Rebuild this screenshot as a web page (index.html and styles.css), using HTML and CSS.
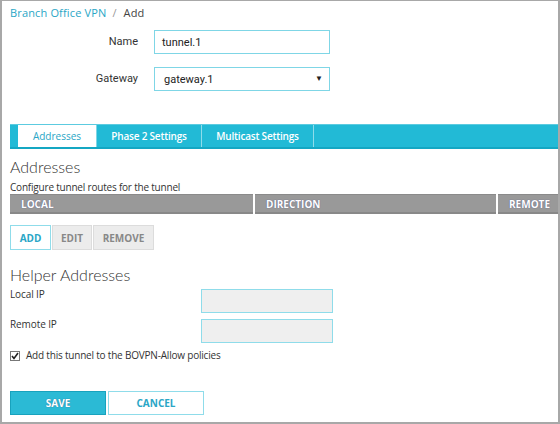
FILE: index.html
```html
<!DOCTYPE html>
<html>
<head>
<meta charset="utf-8">
<link rel="stylesheet" href="styles.css">
</head>
<body>
<div class="frame">
  <div class="crumbs"><a class="crumb-link">Branch Office VPN</a><span class="crumb-sep">/</span><span class="crumb-cur">Add</span></div>

  <div class="form-top">
    <div class="row">
      <label class="lbl">Name</label>
      <div class="field">tunnel.1</div>
    </div>
    <div class="row">
      <label class="lbl">Gateway</label>
      <div class="field select">gateway.1<span class="caret">▼</span></div>
    </div>
  </div>

  <div class="tabs">
    <div class="tab-lead"></div>
    <div class="tab active">Addresses</div>
    <div class="tab">Phase 2 Settings</div>
    <div class="tab">Multicast Settings</div>
    <div class="tab-fill"></div>
  </div>

  <h2 class="heading">Addresses</h2>
  <div class="desc">Configure tunnel routes for the tunnel</div>
  <div class="thead">
    <div class="th c1">LOCAL</div>
    <div class="th c2">DIRECTION</div>
    <div class="th c3">REMOTE</div>
  </div>

  <div class="btn-group">
    <div class="gbtn on">ADD</div>
    <div class="gbtn">EDIT</div>
    <div class="gbtn">REMOVE</div>
  </div>

  <h2 class="heading h2b">Helper Addresses</h2>
  <div class="hrow">
    <div class="hlbl">Local IP</div>
    <div class="hfield"></div>
  </div>
  <div class="hrow">
    <div class="hlbl">Remote IP</div>
    <div class="hfield"></div>
  </div>
  <div class="check-row">
    <span class="cbox"><svg width="8" height="8" viewBox="0 0 8 8"><path d="M1 4 L3 6.5 L7 1" fill="none" stroke="#222" stroke-width="1.6"/></svg></span>
    <span>Add this tunnel to the BOVPN-Allow policies</span>
  </div>

  <div class="actions">
    <div class="btn save">SAVE</div>
    <div class="btn cancel">CANCEL</div>
  </div>
</div>
</body>
</html>
```
FILE: styles.css
```css
html, body { margin: 0; padding: 0; background: #fff; }
body { font-family: "Open Sans", "DejaVu Sans", sans-serif; color: #333; }
.frame {
  width: 560px; height: 424px; box-sizing: border-box;
  border-top: 1px solid #a8a8a8; border-left: 2px solid #a8a8a8;
  border-right: 2px solid #a8a8a8; border-bottom: 2px solid #a8a8a8;
  padding: 0 0 0 8px;
  display: flex; flex-direction: column;
}
.crumbs { font-size: 11px; line-height: 16px; margin-top: 4px; font-family: "Open Sans", sans-serif; letter-spacing: 0.15px; }
.crumb-link { color: #2aa6c6; }
.crumb-sep { color: #999; margin: 0 7px 0 6px; }
.crumb-cur { color: #444; }

.form-top { display: flex; flex-direction: column; gap: 13px; margin-top: 9px; }
.row { display: flex; align-items: center; }
.lbl { width: 144px; box-sizing: border-box; text-align: right; padding-right: 16px; font-family: Roboto, "Liberation Sans", Arial, sans-serif; font-size: 11px; color: #333; margin-top: -1px; }
.field {
  width: 176px; height: 24px; box-sizing: border-box;
  border: 1px solid #7fd6e6; padding: 0 7px;
  font-family: Roboto, "Liberation Sans", Arial, sans-serif; font-size: 11px; color: #222;
  display: flex; align-items: center;
}
.select { position: relative; padding-left: 9px; }
.caret { position: absolute; right: 6px; top: 6px; font-size: 8px; color: #222; }

.tabs {
  margin-top: 33px; height: 25px; box-sizing: border-box;
  display: flex; background: #22bad6;
  border-top: 1px solid #5ccbe0; border-bottom: 2px solid #14a7c3;
}
.tab-lead { width: 8px; }
.tab {
  font-size: 10px; font-weight: 600; color: #fff; letter-spacing: -0.2px;
  display: flex; align-items: center; justify-content: center;
  border-right: 1px solid #8fdcea; box-sizing: border-box;
}
.tab:nth-child(2) { width: 79px; }
.tab:nth-child(3) { width: 105px; }
.tab:nth-child(4) { width: 112px; }
.tab.active { background: #fff; color: #2aa6c6; font-weight: 400; border-right: 1px solid #7fd6e6; letter-spacing: 0; }
.tab-fill { flex: 1; }

.heading {
  margin: 8px 0 0 0; font-family: Lato, "Open Sans", sans-serif; font-weight: 300;
  font-size: 16px; line-height: 20px; color: #333;
}
.desc { font-size: 10px; line-height: 12px; margin-top: 4px; color: #333; letter-spacing: -0.2px; }
.thead {
  display: flex; height: 20px; box-sizing: border-box; margin-top: 1px;
  background: #fff; gap: 2px;
}
.th {
  background: #999; border-top: 1px solid #8a8a8a; border-bottom: 2px solid #888;
  color: #fff; font-weight: 700; font-size: 10px;
  display: flex; align-items: center; padding-left: 11px; box-sizing: border-box;
  text-shadow: 0 0 1px #4a4a80;
}
.c1 { width: 243px; }
.c2 { width: 241px; }
.c3 { flex: 1; }

.btn-group { display: flex; margin-top: 11px; }
.gbtn {
  height: 25px; box-sizing: border-box; display: flex; align-items: center; justify-content: center;
  font-size: 10px; font-weight: 700; color: #888; background: #ececec;
  border: 1px solid #dcdcdc; margin-right: 1px;
}
.gbtn:nth-child(1) { width: 41px; }
.gbtn:nth-child(2) { width: 40px; }
.gbtn:nth-child(3) { width: 61px; }
.gbtn.on { background: #fff; color: #2aa6c6; border-color: #8fdcea; }

.h2b { margin-top: 15px; }
.hrow { display: flex; margin-top: 4px; height: 24px; }
.hrow + .hrow { margin-top: 6px; }
.hlbl { width: 191px; font-size: 10px; line-height: 14px; margin-top: -2px; color: #333; letter-spacing: -0.1px; }
.hfield { width: 132px; height: 24px; box-sizing: border-box; background: #efefef; border: 1px solid #8fdcea; }

.check-row { display: flex; align-items: center; gap: 6px; margin-top: 5px; font-size: 10px; line-height: 15px; color: #333; letter-spacing: -0.2px; }
.cbox {
  width: 8px; height: 8px; border: 1px solid #777; background: #fff;
  display: inline-flex; align-items: center; justify-content: center; box-sizing: content-box;
}
.cbox svg { display: block; }

.actions { display: flex; gap: 2px; margin-top: 28px; }
.btn {
  width: 96px; height: 24px; box-sizing: border-box;
  display: flex; align-items: center; justify-content: center;
  font-size: 10px; font-weight: 700;
}
.save { background: #2bbad5; color: #fff; border: 1px solid #18a2bd; text-shadow: 0 0 1px #2a5c8a; }
.cancel { background: #fff; color: #2aa6c6; border: 1px solid #8fdcea; }
```
